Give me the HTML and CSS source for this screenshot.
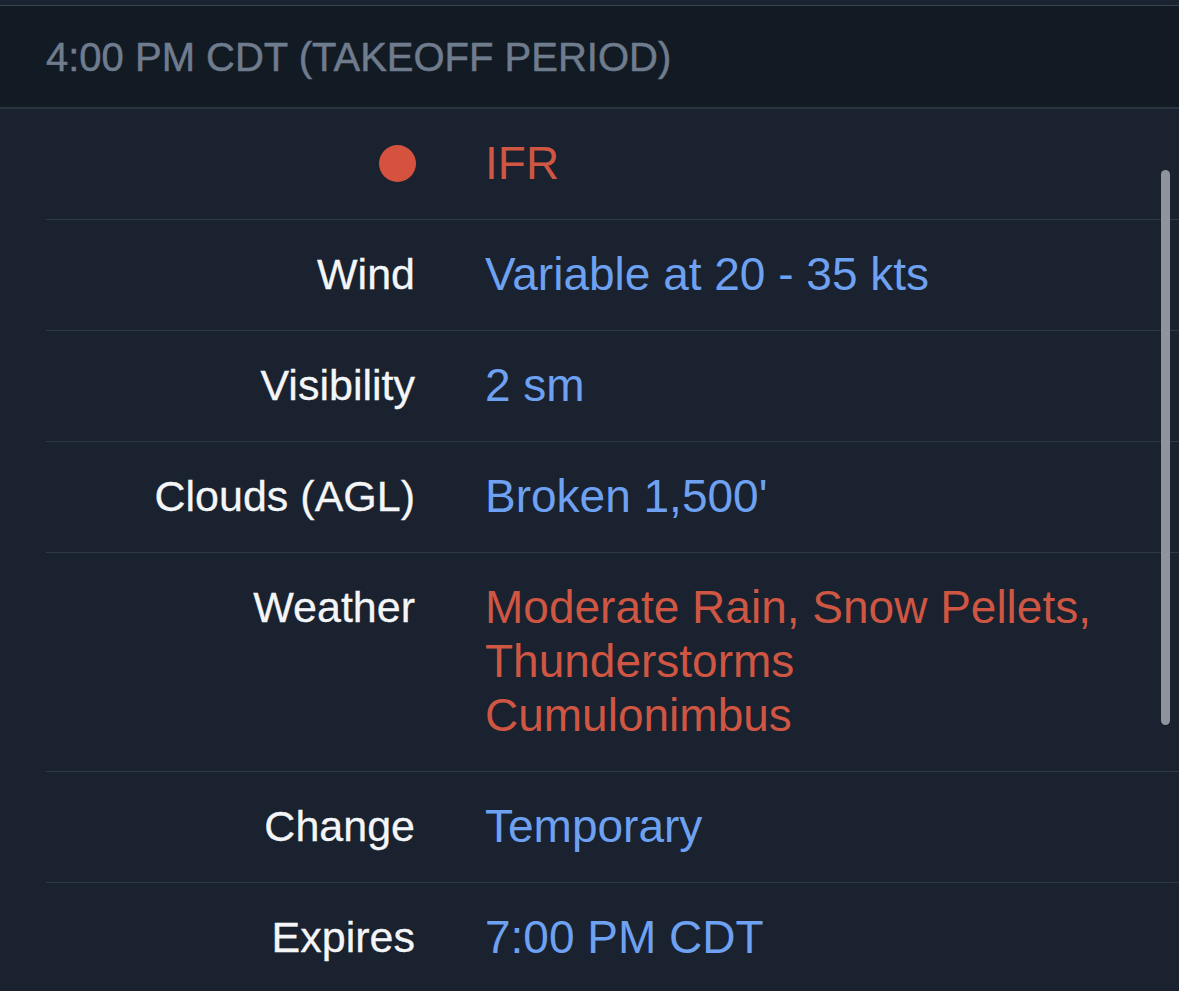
FILE: index.html
```html
<!DOCTYPE html>
<html>
<head>
<meta charset="utf-8">
<link rel="stylesheet" href="styles.css">
</head>
<body>
<div class="screen">
  <div class="topstrip"></div>
  <div class="header">4:00 PM CDT (TAKEOFF PERIOD)</div>
  <div class="list">
    <div class="row">
      <div class="label"><span class="dot"></span></div>
      <div class="value red">IFR</div>
    </div>
    <div class="row">
      <div class="label">Wind</div>
      <div class="value blue">Variable at 20 - 35 kts</div>
    </div>
    <div class="row">
      <div class="label">Visibility</div>
      <div class="value blue">2 sm</div>
    </div>
    <div class="row">
      <div class="label">Clouds (AGL)</div>
      <div class="value blue">Broken 1,500'</div>
    </div>
    <div class="row">
      <div class="label">Weather</div>
      <div class="value red">Moderate Rain, Snow Pellets,<br>Thunderstorms<br>Cumulonimbus</div>
    </div>
    <div class="row">
      <div class="label">Change</div>
      <div class="value blue">Temporary</div>
    </div>
    <div class="row">
      <div class="label">Expires</div>
      <div class="value blue">7:00 PM CDT</div>
    </div>
    <div class="scrollbar"></div>
  </div>
</div>
</body>
</html>
```
FILE: styles.css
```css
html, body {
  margin: 0;
  padding: 0;
  background: #19222e;
}
.screen {
  width: 1179px;
  height: 991px;
  overflow: hidden;
  font-family: "Liberation Sans", Arial, sans-serif;
  background: #19222e;
}
.topstrip {
  height: 5px;
  background: #1a2330;
  border-bottom: 1px solid #3a4350;
}
.header {
  height: 103px;
  box-sizing: border-box;
  background: #121a24;
  border-bottom: 2px solid #2b3441;
  color: #6f7c8e;
  font-size: 40px;
  line-height: 102px;
  padding-left: 46px;
  -webkit-text-stroke: 0.5px #6f7c8e;
}
.list {
  position: relative;
  padding-left: 46px;
}
.row {
  display: flex;
  gap: 70px;
  border-bottom: 1px solid #2e3846;
  padding: 27px 0 29px;
  font-size: 46px;
  line-height: 54px;
}
.label {
  width: 369px;
  flex: none;
  text-align: right;
  color: #f4f5f7;
  font-size: 43px;
  display: flex;
  justify-content: flex-end;
  align-items: center;
  align-self: flex-start;
  height: 54px;
  white-space: nowrap;
  -webkit-text-stroke: 0.3px #f4f5f7;
}
.value {
  white-space: nowrap;
}
.blue { color: #6ea1f1; }
.red { color: #ce5643; }
.dot {
  width: 37px;
  height: 37px;
  border-radius: 50%;
  background: #d5533e;
  margin-right: -1px;
}
.scrollbar {
  position: absolute;
  left: 1161px;
  top: 61px;
  width: 9px;
  height: 555px;
  border-radius: 5px;
  background: #8f949c;
}
```
